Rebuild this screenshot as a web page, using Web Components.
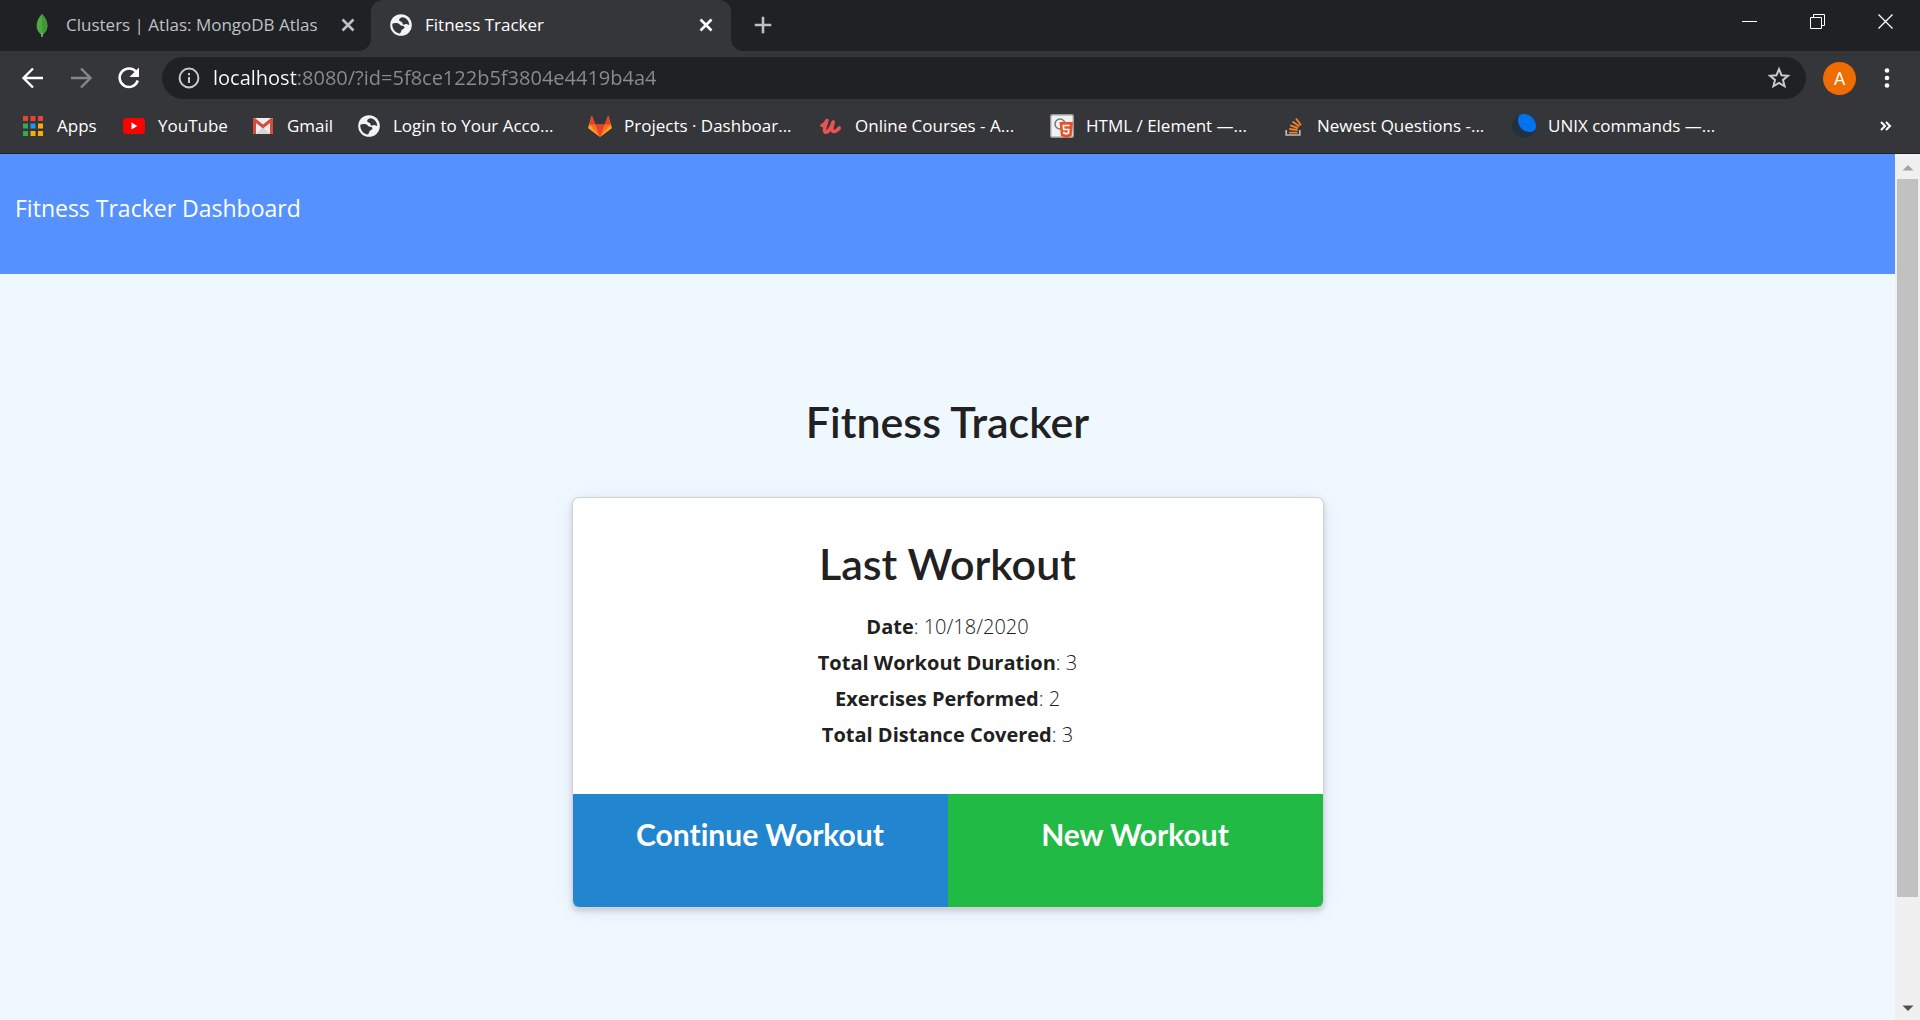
<!DOCTYPE html>
<html lang="en">
<head>
<meta charset="utf-8">
<title>Fitness Tracker</title>
<style>
html, body { height: 100%; margin: 0; }
body { font-family: "Open Sans", "Noto Sans", sans-serif; overflow: hidden; }
</style>
</head>
<body>
<browser-window>
  <tab-strip slot="tabs">
    <browser-tab icon="leaf">Clusters | Atlas: MongoDB Atlas</browser-tab>
    <browser-tab icon="globe" active>Fitness Tracker</browser-tab>
  </tab-strip>
  <address-bar slot="toolbar" host="localhost" rest=":8080/?id=5f8ce122b5f3804e4419b4a4"></address-bar>
  <bookmark-bar slot="bookmarks">
    <bookmark-item icon="apps" style="--w:101px">Apps</bookmark-item>
    <bookmark-item icon="youtube" style="--w:129px">YouTube</bookmark-item>
    <bookmark-item icon="gmail" style="--w:106px">Gmail</bookmark-item>
    <bookmark-item icon="globe">Login to Your Acco...</bookmark-item>
    <bookmark-item icon="gitlab">Projects · Dashboar...</bookmark-item>
    <bookmark-item icon="udemy">Online Courses - A...</bookmark-item>
    <bookmark-item icon="html">HTML / Element —...</bookmark-item>
    <bookmark-item icon="stack">Newest Questions -...</bookmark-item>
    <bookmark-item icon="moon">UNIX commands —...</bookmark-item>
  </bookmark-bar>
  <fitness-page>
    <site-header slot="header">Fitness Tracker Dashboard</site-header>
    <workout-card heading="Last Workout">
      <workout-stat label="Date">10/18/2020</workout-stat>
      <workout-stat label="Total Workout Duration">3</workout-stat>
      <workout-stat label="Exercises Performed">2</workout-stat>
      <workout-stat label="Total Distance Covered">3</workout-stat>
      <workout-action slot="actions" style="--fill:#2185d0">Continue Workout</workout-action>
      <workout-action slot="actions" style="--fill:#21ba45">New Workout</workout-action>
    </workout-card>
  </fitness-page>
</browser-window>

<script>
const ICONS = {
  leaf: `<path d="M12 1C8 5 6.600 9 6.600 13c0 4 2 6.600 4.900 8.800L12 24l.5-2.200c2.900-2.200 4.900-4.800 4.900-8.800C17.400 9 16 5 12 1z" fill="#4faa41"/><path d="M12 1v21c3-2.200 5.400-5 5.400-9C17.400 9 16 5 12 1z" fill="#3f9937"/><path d="M11.600 20h.8l.2 4h-1.200z" fill="#c2bfbf"/>`,
  globe: `<circle cx="12" cy="12" r="10.800" fill="#f1f3f4"/><path d="M13.500 4.200c-1.800.3-3.400 1.400-3.400 2.700 0 1.500 2 1.300 2.900 2.200.8.900.1 2 1.200 2.500 1.300.5 2-.6 3.200-.6 1.100 0 1.600.8 2.900.9-.2-4.300-3-7.300-6.800-7.700zM3.300 10.700c1.700-.8 3.700-.8 5.500-.4 2 .4 1.700 1.800 3.200 2.300 1.500.4 3.200.1 3.400 1.700.2 1.700-2.200 1.700-2.800 2.800-.5 1.200-.5 2.300-1.600 3.500C6.500 20 3 16 3.300 10.700z" fill="#35363a"/>`,
  apps: [0,1,2].map(r => [0,1,2].map(c => `<rect x="${2+c*7.500}" y="${2+r*7.500}" width="5" height="5" fill="${[["#ea4335","#ea4335","#ea4335"],["#34a853","#2196f3","#fbab05"],["#34a853","#fbab05","#fbab05"]][r][c]}"/>`).join("")).join(""),
  youtube: `<rect x="1" y="4" width="22" height="16" rx="3.500" fill="#f00"/><path d="M9.500 8.600v6.800l5.800-3.400z" fill="#fff"/>`,
  gmail: `<rect x="2" y="4" width="20" height="16" rx="1" fill="#eee"/><path d="M5 20l7-7 7 7z" fill="#d5d5d5"/><path d="M2 5.500v13.500a1 1 0 0 0 1 1h2V9l7 5.600L19 9v11h2a1 1 0 0 0 1-1V5.500C22 4 20.600 3.600 19.500 4.400L12 10.500 4.500 4.400C3.400 3.600 2 4 2 5.500z" fill="#d54b3d"/>`,
  gitlab: `<path d="M12 23L0 14 3.600 1.500 7.500 10.500h9L20.400 1.500 24 14z" fill="#fc6d26"/><path d="M12 23L7.500 10.500h9zM1.600 10.500L4 1.300l3.500 9.200zM22.400 10.500L20 1.300l-3.500 9.200z" fill="#e24329"/><path d="M12 23L.3 14l1.300-3.500zM12 23l11.700-9-1.300-3.500z" fill="#fca326"/>`,
  udemy: `<path d="M3 11.500c2.500-.5 4-2.500 5-5-1.200 4-3.400 8.800-2.200 11 1.500 2.500 6.200-2 8.400-9.500-1.200 4.500-2 8.600-.2 9.300 1.800.6 4-.6 6.300-3.300" fill="none" stroke="#eb5252" stroke-width="3.600" stroke-linecap="round" stroke-linejoin="round"/>`,
  html: `<rect x=".7" y=".7" width="22.600" height="22.600" rx="1.500" fill="#f1f1f1" stroke="#999" stroke-width="1.400"/><circle cx="10" cy="10" r="5" fill="none" stroke="#777" stroke-width="1.500"/><path d="M9.500 8H23l-1.300 14-5.400 2-5.400-2z" fill="#e5532d"/><path d="M19.600 11.500h-6.200l.3 4h5l-.3 3.600-2.200.8-2.200-.8-.1-1.300" fill="none" stroke="#fff" stroke-width="1.700"/>`,
  stack: `<path d="M5.200 16v5h13.600v-5" fill="none" stroke="#bcbbbb" stroke-width="1.700"/><path d="M8 18.600h8.500M8.200 15l8.300 1M9.200 11.400l7.800 2.800M11.500 7.600l6.800 5M15 4.500l5 6.800" fill="none" stroke="#f48024" stroke-width="1.900"/>`,
  moon: `<circle cx="12" cy="12" r="12" fill="#22303f"/><path d="M11.500 0C18 0 24 5 24 12.500c0 3.500-2.500 5.500-6.500 5.500C11 18 6 12.500 6 6c0-4 2-6 5.500-6z" fill="#0073ef"/>`,
  close: `<path d="M6.500 6.500l11 11M17.500 6.500l-11 11" fill="none" stroke="currentColor" stroke-width="2.600"/>`,
  plus: `<path d="M12 3v18M3 12h18" fill="none" stroke="currentColor" stroke-width="2.800"/>`,
  back: `<path d="M22 12H3M12 2.500L2.500 12l9.500 9.500" fill="none" stroke="currentColor" stroke-width="2.400"/>`,
  forward: `<path d="M2 12h19M12 2.500l9.500 9.500-9.500 9.500" fill="none" stroke="currentColor" stroke-width="2.400"/>`,
  reload: `<path d="M19.300 6A9.300 9.300 0 1 0 20.800 14.500" fill="none" stroke="currentColor" stroke-width="2.500"/><path d="M22 1.500V11h-9.500z" fill="currentColor"/>`,
  info: `<circle cx="12" cy="12" r="9.400" fill="none" stroke="currentColor" stroke-width="2"/><path d="M11 11h2v6h-2zM11 7h2v2.200h-2z" fill="currentColor"/>`,
  star: `<path d="M12 3.200l2.500 6 6.500.5-5 4.200 1.600 6.400L12 17l-5.600 3.300L8 13.900 3 9.700l6.500-.5z" fill="none" stroke="currentColor" stroke-width="2"/>`,
  dots: `<circle cx="12" cy="4.500" r="2.300" fill="currentColor"/><circle cx="12" cy="12" r="2.300" fill="currentColor"/><circle cx="12" cy="19.500" r="2.300" fill="currentColor"/>`,
  more: `<path d="M8 8l4 4-4 4M13 8l4 4-4 4" fill="none" stroke="currentColor" stroke-width="2"/>`,
  minimize: `<path d="M4 12.500h15" fill="none" stroke="currentColor"/>`,
  restore: `<path d="M4.500 8.500h11v11h-11zM7.500 8.500v-3h11v11h-3" fill="none" stroke="currentColor"/>`,
  exit: `<path d="M4.500 5.500l14 14M18.500 5.500l-14 14" fill="none" stroke="currentColor" stroke-width="1.300"/>`,
  up: `<path d="M6.500 15.500h11L12 10z" fill="#a3a3a3"/>`,
  down: `<path d="M6.500 9.500h11L12 15z" fill="#505050"/>`
};
const svg = name => `<svg viewBox="0 0 24 24" width="24" height="24" aria-hidden="true">${ICONS[name]}</svg>`;
const BASE = `:host,*{box-sizing:border-box} svg{display:block;flex:none}
button{font:inherit;color:inherit;background:none;border:0;padding:0;margin:0;display:flex;align-items:center;justify-content:center;cursor:pointer}`;
const define = (tag, render) => customElements.define(tag, class extends HTMLElement {
  constructor() { super(); this.attachShadow({ mode: "open" }); }
  connectedCallback() { this.shadowRoot.innerHTML = `<style>${BASE}</style>` + render(this); }
});

define("browser-window", () => `<style>
:host{display:flex;flex-direction:column;height:100vh;background:#35363a;color:#fff}
.view{flex:1;min-height:0;display:flex;border-top:1px solid #222326}
::slotted(fitness-page){flex:1;min-width:0}
</style><slot name="tabs"></slot><slot name="toolbar"></slot><slot name="bookmarks"></slot>
<div class="view"><slot></slot><scroll-track></scroll-track></div>`);

define("tab-strip", () => `<style>
:host{display:flex;height:51px;background:#202124;color:#bdc1c6}
.new{width:64px;height:50px}
.controls{margin-left:auto;display:flex}
.controls button{width:68px;height:42px;color:#fff}
</style><slot></slot><button class="new" aria-label="New tab"><svg viewBox="0 0 24 24" width="22" height="22">${ICONS.plus}</svg></button>
<div class="controls"><button aria-label="Minimize">${svg("minimize")}</button><button aria-label="Restore">${svg("restore")}</button><button aria-label="Close">${svg("exit")}</button></div>`);

define("browser-tab", el => `<style>
:host{display:flex;align-items:center;width:371px;padding:0 11px 2px 30px;font-size:17px;line-height:24px;color:#bdc1c6}
:host([active]){position:relative;width:360px;padding:0 13px 2px 18px;background:#35363a;border-radius:12px 12px 0 0;color:#fff}
:host([active])::before,:host([active])::after{content:"";position:absolute;bottom:0;width:12px;height:12px}
:host([active])::before{right:100%;background:radial-gradient(circle at 0 0,#202124 12px,#35363a 12px)}
:host([active])::after{left:100%;background:radial-gradient(circle at 100% 0,#202124 12px,#35363a 12px)}
span{flex:1;white-space:nowrap;margin-left:12px}
</style>${svg(el.getAttribute("icon"))}<span><slot></slot></span><button aria-label="Close tab">${svg("close")}</button>`);

define("address-bar", el => {
  const host = el.getAttribute("host"), rest = el.getAttribute("rest");
  return `<style>
:host{display:flex;align-items:center;height:54px;padding:0 21px}
.nav{width:24px;margin-right:24px}
.off{color:#86878a}
form{flex:1;display:flex;align-items:center;height:42px;margin:0 17px 0 -3px;padding:0 15px;border-radius:21px;background:#202124}
form button{color:#c8cacd}
input{flex:1;min-width:0;height:42px;margin:0 12px;padding:0;border:0;outline:0;font:20px/42px "Open Sans",sans-serif;color:#9a9b9d;
background:linear-gradient(90deg,#fff var(--split),#8b8c8e var(--split));-webkit-background-clip:text;background-clip:text;-webkit-text-fill-color:transparent}
.avatar{width:33px;height:33px;border-radius:50%;background:#ef6c00;font:18px/33px Roboto,sans-serif;margin-right:19px}
</style>
<button class="nav" aria-label="Back">${svg("back")}</button><button class="nav off" aria-label="Forward">${svg("forward")}</button><button class="nav" aria-label="Reload">${svg("reload")}</button>
<form><button type="button" aria-label="Site information">${svg("info")}</button><input type="text" aria-label="Address" style="--split:84px" value="${host}${rest}"><button type="button" aria-label="Bookmark this page">${svg("star")}</button></form>
<button class="avatar" aria-label="Profile">A</button><button aria-label="Menu">${svg("dots")}</button>`;
});

define("bookmark-bar", () => `<style>
:host{display:flex;align-items:center;height:48px;padding:0 23px 6px 21px}
button{margin-left:auto}
</style><slot></slot><button aria-label="More bookmarks">${svg("more")}</button>`);

define("bookmark-item", el => `<style>
:host{display:block;flex:0 0 var(--w,231px)}
a{display:flex;align-items:center;gap:12px;color:#fff;text-decoration:none;font-size:17px;line-height:24px;white-space:nowrap}
</style><a href="#">${svg(el.getAttribute("icon"))}<span><slot></slot></span></a>`);

define("scroll-track", () => `<style>
:host{display:flex;flex-direction:column;align-items:center;width:25px;background:#f0f0f0}
button{height:25px}
.rail{flex:1;width:21px}
.thumb{height:88%;background:#c1c1c1}
</style><button aria-label="Scroll up">${svg("up")}</button><div class="rail"><div class="thumb"></div></div><button aria-label="Scroll down">${svg("down")}</button>`);

define("fitness-page", () => `<style>
:host{display:flex;flex-direction:column;background:#f0f8ff;color:#212121}
main{display:flex;flex-direction:column;align-items:center;padding-top:119px}
h1{margin:0 0 47px;font:600 43px/58px Lato,sans-serif}
</style><slot name="header"></slot><main><h1>Fitness Tracker</h1><slot></slot></main>`);

define("site-header", () => `<style>
:host{display:block;height:120px;padding:36px 15px 0;background:#5592ff;color:#fff}
a{color:inherit;text-decoration:none;font-size:23px;line-height:36px}
</style><a href="#"><slot></slot></a>`);

define("workout-card", el => `<style>
:host{display:block;width:750px;max-width:100%;border-radius:6px;background:#fff;box-shadow:0 0 0 1px #d4d4d5,0 3px 5px 1px #c9ccd2,0 3px 22px rgba(120,120,190,.16);overflow:hidden}
section{display:flex;flex-direction:column;align-items:center;padding:37px 20px 41px}
h2{margin:0 0 16px;font:600 43px/58px Lato,sans-serif}
footer{display:flex}
</style><section><h2>${el.getAttribute("heading")}</h2><slot></slot></section><footer><slot name="actions"></slot></footer>`);

define("workout-stat", el => `<style>
:host{display:block;font-size:20px;line-height:36px;font-weight:300}
b{font-weight:700}
</style><b>${el.getAttribute("label")}</b>: <slot></slot>`);

define("workout-action", () => `<style>
:host{display:flex;flex:1}
button{flex:1;height:113px;padding-top:20px;align-items:flex-start;background:var(--fill);color:#fff;font:bold 30px/40px Lato,sans-serif;font-variant-ligatures:none}
</style><button><slot></slot></button>`);
</script>
</body>
</html>
